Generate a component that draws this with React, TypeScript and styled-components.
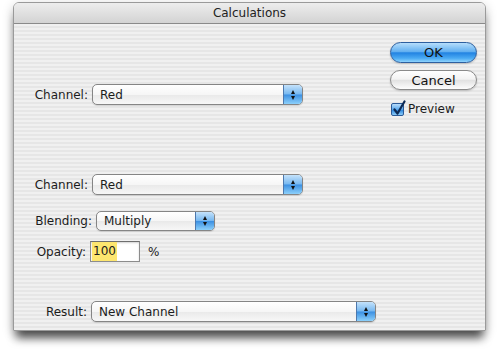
import React from "react";
import styled, { createGlobalStyle } from "styled-components";

const GlobalStyle = createGlobalStyle`
  html, body {
    margin: 0;
    padding: 0;
    background: #ffffff;
  }
  body {
    font-family: "DejaVu Sans", "Liberation Sans", sans-serif;
    font-size: 12px;
    color: #1c1c1c;
  }
`;

const Page = styled.div`
  width: 500px;
  height: 352px;
  box-sizing: border-box;
  padding: 2px 0 0 13px;
  overflow: hidden;
`;

const Window = styled.div`
  width: 473px;
  height: 329px;
  box-sizing: border-box;
  display: flex;
  flex-direction: column;
  border: 1px solid #9a9a9a;
  border-radius: 6px 6px 0 0;
  overflow: hidden;
  box-shadow: 0 10px 10px -3px rgba(0, 0, 0, 0.65), 0 3px 12px rgba(0, 0, 0, 0.2);
`;

const TitleBar = styled.div`
  height: 20px;
  flex: none;
  display: flex;
  align-items: center;
  justify-content: center;
  border-bottom: 1px solid #8a8a8a;
  background: linear-gradient(#ededed, #d3d3d3);
  color: #222;
  font-size: 12px;
`;

const Body = styled.div`
  flex: 1;
  display: flex;
  padding-right: 8px;
  background: repeating-linear-gradient(to bottom, #f0f0f0 0 2px, #e6e6e6 2px 4px);
`;

const Form = styled.div`
  flex: 1;
  display: flex;
  flex-direction: column;
`;

const Row = styled.div<{ $mt: number }>`
  display: flex;
  align-items: center;
  margin-top: ${(p) => p.$mt}px;
`;

const Label = styled.div<{ $w: number }>`
  width: ${(p) => p.$w}px;
  text-align: right;
  margin-right: 4px;
  white-space: nowrap;
`;

const Popup = styled.div<{ $w: number; $h?: number }>`
  width: ${(p) => p.$w}px;
  height: ${(p) => p.$h ?? 21}px;
  box-sizing: border-box;
  display: flex;
  border: 1px solid #858585;
  border-radius: 5px;
  background: linear-gradient(#ffffff 0%, #f6f6f6 50%, #e9e9e9 51%, #f7f7f7 100%);
  box-shadow: 0 1px 1px rgba(0, 0, 0, 0.12);
`;

const PopupText = styled.div`
  flex: 1;
  display: flex;
  align-items: center;
  padding-left: 7px;
`;

const Stepper = styled.div`
  width: 18px;
  display: flex;
  flex-direction: column;
  align-items: center;
  justify-content: center;
  gap: 2px;
  border-left: 1px solid #4d78ad;
  border-radius: 0 4px 4px 0;
  background: linear-gradient(#c4e2fb 0%, #77b8f0 48%, #3c90e2 52%, #8cd0fb 100%);
`;

const Arrow = styled.div<{ $up?: boolean }>`
  width: 0;
  height: 0;
  border-left: 2.5px solid transparent;
  border-right: 2.5px solid transparent;
  ${(p) => (p.$up ? "border-bottom: 4px solid #111;" : "border-top: 4px solid #111;")}
`;

const Field = styled.div`
  width: 50px;
  height: 21px;
  box-sizing: border-box;
  display: flex;
  align-items: center;
  padding-left: 1px;
  border: 1px solid #8c8c8c;
  border-top-color: #6e6e6e;
  background: #ffffff;
  box-shadow: inset 0 1px 2px rgba(0, 0, 0, 0.18);
`;

const Selected = styled.span`
  background: #fde66f;
  padding: 1px 1px;
  line-height: 17px;
`;

const Unit = styled.span`
  margin-left: 8px;
`;

const Side = styled.div`
  width: 87px;
  display: flex;
  flex-direction: column;
  padding-top: 18px;
`;

const PillButton = styled.div<{ $primary?: boolean; $mt?: number }>`
  height: ${(p) => (p.$primary ? 21 : 20)}px;
  margin-top: ${(p) => p.$mt ?? 0}px;
  box-sizing: border-box;
  display: flex;
  align-items: center;
  justify-content: center;
  border-radius: 11px;
  font-size: 13px;
  color: #111;
  border: 1px solid ${(p) => (p.$primary ? "#2d5f9f" : "#8a8a8a")};
  background: ${(p) =>
    p.$primary
      ? "linear-gradient(#b6defc 0%, #63b0f0 45%, #2283e2 52%, #4aaaf3 80%, #8fd3fc 100%)"
      : "linear-gradient(#ffffff 0%, #f3f3f3 45%, #e2e2e2 52%, #f2f2f2 80%, #fdfdfd 100%)"};
  box-shadow: 0 1px 2px rgba(0, 0, 0, 0.2);
`;

const CheckRow = styled.label`
  display: flex;
  align-items: center;
  gap: 4px;
  margin-top: 12px;
  margin-left: 1px;
`;

const CheckBox = styled.div`
  width: 13px;
  height: 13px;
  box-sizing: border-box;
  border: 1px solid #2b5a97;
  border-radius: 2px;
  background: linear-gradient(#b9ddfb 0%, #5aa8ec 50%, #2e86dd 55%, #8ccdf8 100%);
  position: relative;
`;

const Check = styled.svg`
  position: absolute;
  left: 0px;
  top: -4px;
`;

const PopupControl = ({ w, h, value }: { w: number; h?: number; value: string }) => (
  <Popup $w={w} $h={h}>
    <PopupText>{value}</PopupText>
    <Stepper>
      <Arrow $up />
      <Arrow />
    </Stepper>
  </Popup>
);

export default function App() {
  return (
    <>
      <GlobalStyle />
      <Page>
        <Window>
          <TitleBar>Calculations</TitleBar>
          <Body>
            <Form>
              <Row $mt={60}>
                <Label $w={74}>Channel:</Label>
                <PopupControl w={211} value="Red" />
              </Row>
              <Row $mt={69}>
                <Label $w={74}>Channel:</Label>
                <PopupControl w={211} value="Red" />
              </Row>
              <Row $mt={16}>
                <Label $w={78}>Blending:</Label>
                <PopupControl w={119} h={20} value="Multiply" />
              </Row>
              <Row $mt={10}>
                <Label $w={72}>Opacity:</Label>
                <Field>
                  <Selected>100</Selected>
                </Field>
                <Unit>%</Unit>
              </Row>
              <Row $mt={39}>
                <Label $w={73}>Result:</Label>
                <PopupControl w={285} value="New Channel" />
              </Row>
            </Form>
            <Side>
              <PillButton $primary>OK</PillButton>
              <PillButton $mt={7}>Cancel</PillButton>
              <CheckRow>
                <CheckBox>
                  <Check width="15" height="16" viewBox="0 0 15 16">
                    <path d="M2.5 9.5 L5.5 13.5 L12.5 1.5" fill="none" stroke="#0d2a55" strokeWidth="2.2" strokeLinecap="round" strokeLinejoin="round" />
                  </Check>
                </CheckBox>
                <span>Preview</span>
              </CheckRow>
            </Side>
          </Body>
        </Window>
      </Page>
    </>
  );
}
